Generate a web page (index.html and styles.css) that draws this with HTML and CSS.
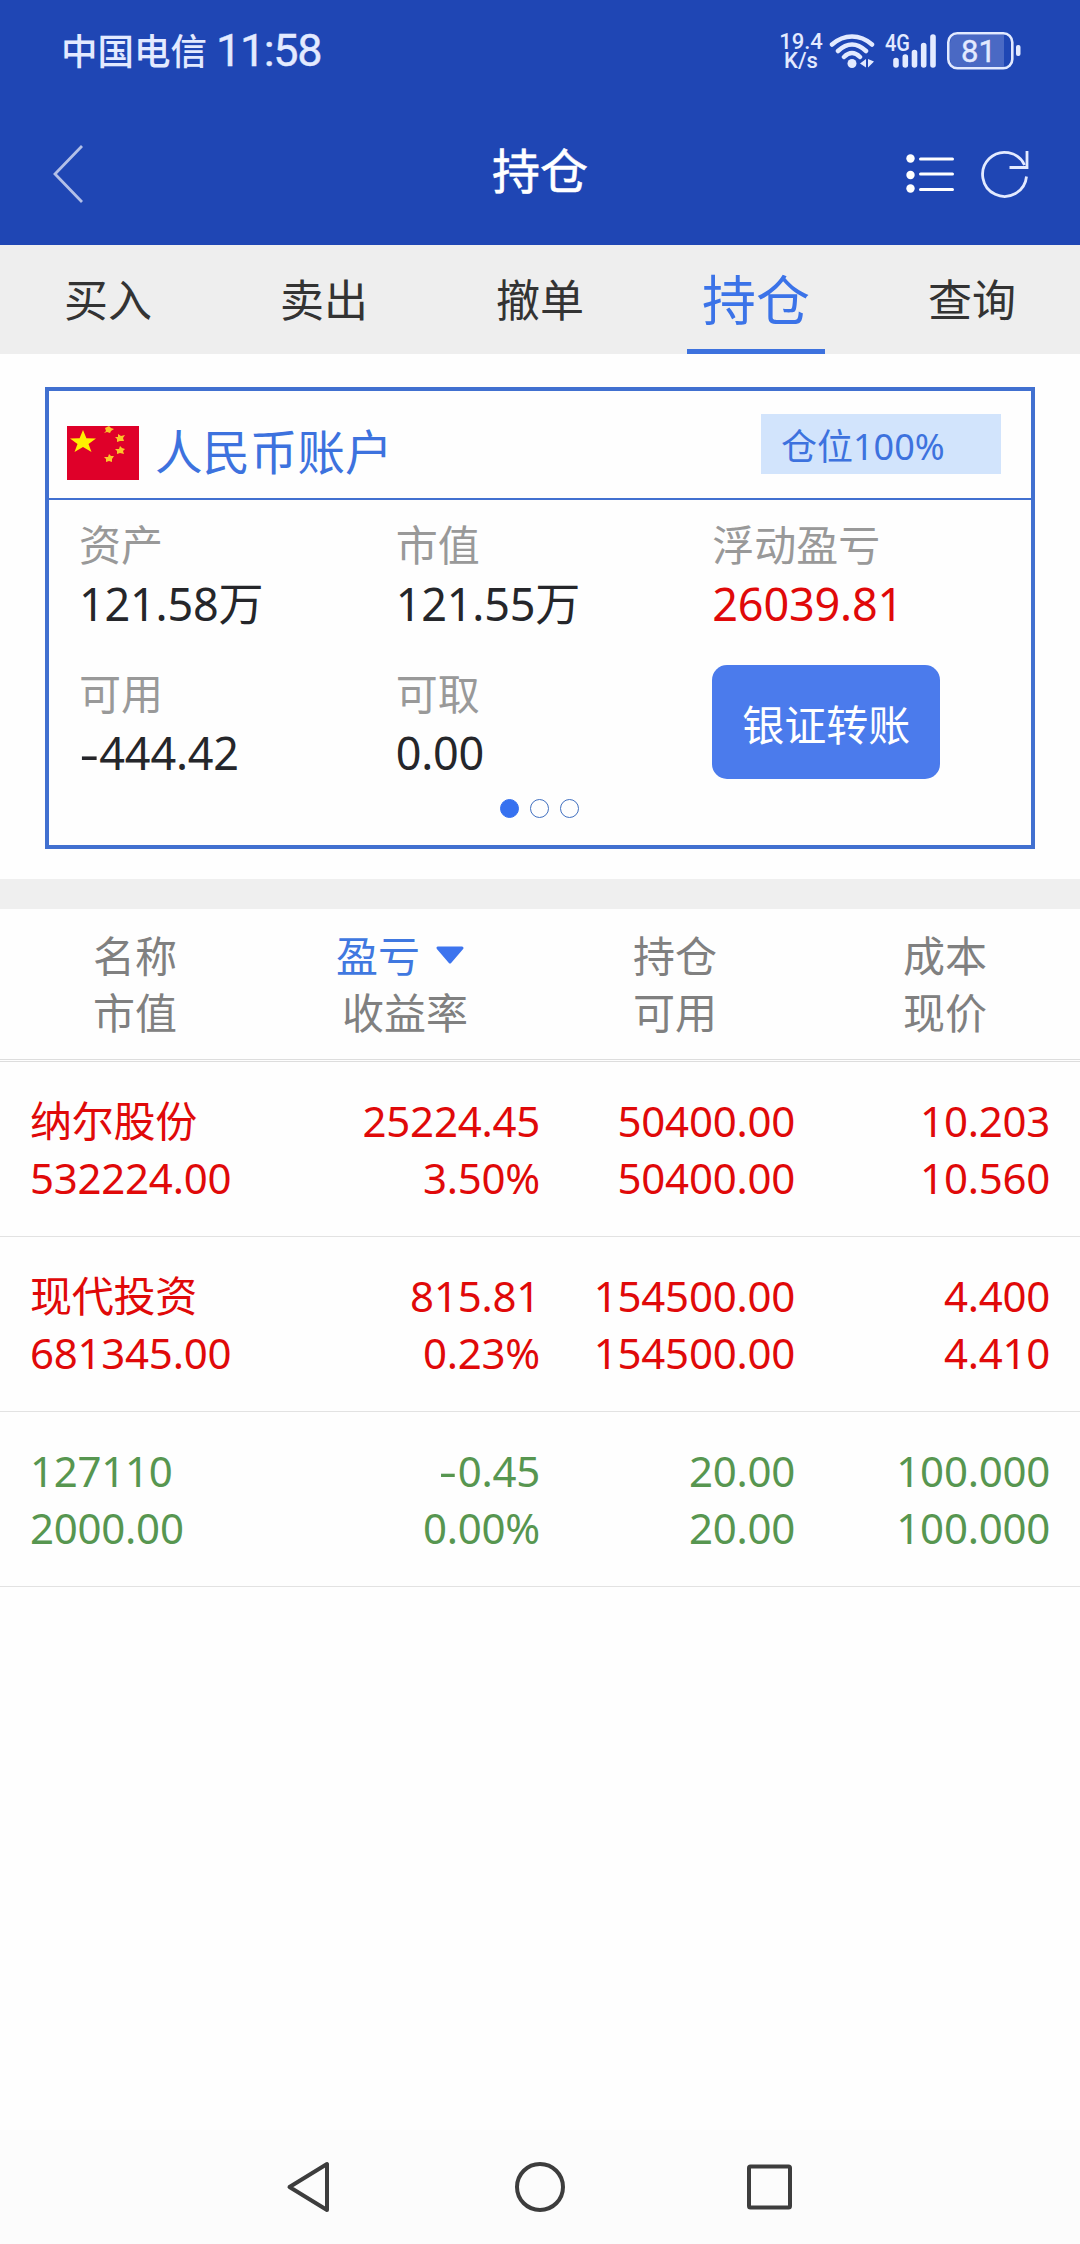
FILE: index.html
```html
<!DOCTYPE html>
<html lang="zh-CN">
<head>
  <meta charset="UTF-8">
  <title>持仓</title>
  <link rel="stylesheet" href="styles.css">
</head>
<body>
  <div class="header">
    <div class="status-bar">
      <div class="carrier">中国电信</div>
      <div class="clock">11:58</div>
      <div class="status-icons">
        <div class="speed"><span>19.4</span><span>K/s</span></div>
        <svg class="wifi" width="46" height="36" viewBox="0 0 46 36" fill="none" stroke="#e3eaff" stroke-width="4.5" stroke-linecap="round">
          <path d="M3 11.500Q12 3.500 23 3.500T43 11.500M9 18Q16 11.500 23 11.500T37 18M15 24Q19 20 23 20T31 24"/>
          <circle cx="23" cy="30.500" r="4.500" fill="#e3eaff" stroke="none"/>
          <path d="M37 26v8.500l-6-4zM39 26v8.500l6-6z" fill="#e3eaff" stroke="none"/>
        </svg>
        <svg class="signal" width="52" height="42" viewBox="0 -3 52 42">
          <text x="0" y="18" class="signal-text" textLength="25" lengthAdjust="spacingAndGlyphs">4G</text>
          <path d="M11 27.500V32M20.300 24V32M29.500 19.500V32M38.700 12.500V32M48 4V32" stroke="#e3eaff" stroke-width="5.600" stroke-linecap="round"/>
        </svg>
        <svg class="battery" width="74" height="38" viewBox="0 0 74 38">
          <path d="M11 2.500H57V35.500H11Q3 35.500 3 27V11Q3 2.500 11 2.500z" fill="#4a69c4"/>
          <rect x="1.300" y="1.300" width="64" height="35" rx="9" fill="none" stroke="#e3eaff" stroke-width="2.600"/>
          <rect x="69" y="13" width="4.500" height="11" rx="2" fill="#e3eaff"/>
          <text x="31.500" y="30" text-anchor="middle" class="battery-text">81</text>
        </svg>
      </div>
    </div>
    <div class="title-bar">
      <svg class="back" width="32" height="60" viewBox="0 0 32 60" fill="none" stroke="#b3c0e8" stroke-width="2.800">
        <path d="M31 2L4 30L31 58"/>
      </svg>
      <h1>持仓</h1>
      <div class="actions">
        <svg width="48" height="40" viewBox="0 0 48 40" fill="#fff">
          <circle cx="4.500" cy="4.500" r="4.200"/><circle cx="4.500" cy="21" r="4.200"/><circle cx="4.500" cy="34.500" r="4.200"/>
          <path d="M14.500 5H46.500M14.500 20H46.500M14.500 35.500H46.500" stroke="#fff" stroke-width="3" stroke-linecap="round"/>
        </svg>
        <svg width="48" height="48" viewBox="0 0 48 48" fill="none" stroke="#e3eaff" stroke-width="2.800">
          <path d="M45.500 26.500A22 22 0 1 1 43.500 15"/>
          <path d="M28.500 17.500H46V1"/>
        </svg>
      </div>
    </div>
  </div>

  <div class="tabs">
    <div class="tab">买入</div>
    <div class="tab">卖出</div>
    <div class="tab">撤单</div>
    <div class="tab active">持仓</div>
    <div class="tab">查询</div>
  </div>

  <div class="account">
    <div class="account-header">
      <svg class="flag" width="72" height="54" viewBox="0 0 72 54">
        <rect width="72" height="54" fill="#df0029"/>
        <path d="M16 4l3.400 8.300 9.600.3-7.500 5.400 3 8-8.500-5-8.500 5 3-8-7.500-5.400 9.600-.3z" fill="#fff000"/>
        <g fill="#fbc52a">
          <path d="M42 0l2 2 3 1-3 2-1 2-3-1-3 1 2-2-1-3z"/>
          <path d="M51 8l3 2 4-1-2 3 1 3-4 0-3 1 0-3-2-2 3 0z"/>
          <path d="M53 20l2 2 3 1-2 2 1 3-4-1-3 1 0-3-2-2 4 0z"/>
          <path d="M42 28l2 2 3 0-2 3 0 3-3-1-3 1 0-3-2-2 4 0z"/>
        </g>
      </svg>
      <div class="account-name">人民币账户</div>
      <div class="badge">仓位100%</div>
    </div>
    <div class="account-grid">
      <div class="item"><div class="label">资产</div><div class="value">121.58万</div></div>
      <div class="item"><div class="label">市值</div><div class="value">121.55万</div></div>
      <div class="item"><div class="label">浮动盈亏</div><div class="value red">26039.81</div></div>
      <div class="item"><div class="label">可用</div><div class="value"><span class="minus">-</span>444.42</div></div>
      <div class="item"><div class="label">可取</div><div class="value">0.00</div></div>
      <div class="item"><button class="transfer">银证转账</button></div>
    </div>
    <div class="dots">
      <span class="dot current"></span>
      <span class="dot"></span>
      <span class="dot"></span>
    </div>
  </div>

  <div class="list-header">
    <div>名称<br>市值</div>
    <div>
      <div class="sort">盈亏<svg width="30" height="19" viewBox="0 0 30 19"><path d="M3 2H27L15 16z" fill="#3d74ee" stroke="#3d74ee" stroke-width="3" stroke-linejoin="round"/></svg></div>
      收益率
    </div>
    <div>持仓<br>可用</div>
    <div>成本<br>现价</div>
  </div>

  <div class="list">
    <div class="row red">
      <div>纳尔股份<br>532224.00</div>
      <div>25224.45<br>3.50%</div>
      <div>50400.00<br>50400.00</div>
      <div>10.203<br>10.560</div>
    </div>
    <div class="row red">
      <div>现代投资<br>681345.00</div>
      <div>815.81<br>0.23%</div>
      <div>154500.00<br>154500.00</div>
      <div>4.400<br>4.410</div>
    </div>
    <div class="row green">
      <div>127110<br>2000.00</div>
      <div><span class="minus">-</span>0.45<br>0.00%</div>
      <div>20.00<br>20.00</div>
      <div>100.000<br>100.000</div>
    </div>
  </div>

  <div class="nav-bar">
    <svg width="46" height="52" viewBox="0 0 46 52"><path d="M3.500 26L41 3V49z"/></svg>
    <svg width="52" height="52" viewBox="0 0 52 52"><circle cx="26" cy="26" r="23"/></svg>
    <svg width="46" height="52" viewBox="0 0 46 52"><rect x="2" y="5.500" width="41" height="41" rx="1.500"/></svg>
  </div>
</body>
</html>
```
FILE: styles.css
```css
* {
  box-sizing: border-box;
}
body {
  margin: 0;
  height: 2244px;
  display: flex;
  flex-direction: column;
  background: #fefefe;
  font-family: "Noto Sans", "Noto Sans CJK SC", sans-serif;
  font-size: 42px;
  color: #25262a;
}
svg {
  display: block;
  flex: none;
}

/* header */
.header {
  height: 245px;
  background: #1f46b4;
  color: #fff;
}
.status-bar {
  display: flex;
  align-items: center;
  height: 102px;
  padding: 0 59px 0 61px;
  color: #e3eaff;
}
.carrier {
  font-size: 36.5px;
  font-weight: 500;
  line-height: 50px;
}
.clock {
  margin-left: 9px;
  font-family: Roboto, sans-serif;
  font-size: 45px;
  line-height: 50px;
  letter-spacing: -1.4px;
  -webkit-text-stroke: 0.4px #e3eaff;
}
.status-icons {
  display: flex;
  align-items: center;
  margin-left: auto;
}
.speed {
  display: flex;
  flex-direction: column;
  width: 46px;
  text-align: center;
  font-family: "Liberation Sans Narrow", Roboto, sans-serif;
  font-size: 22px;
  font-weight: 500;
  line-height: 19px;
}
.wifi {
  margin-left: 5px;
}
.signal {
  margin-left: 10px;
}
.battery {
  margin-left: 10px;
}
.signal-text {
  font: 500 23px Roboto, sans-serif;
  fill: #e3eaff;
}
.battery-text {
  font: 31px Roboto, sans-serif;
  fill: #e3eaff;
  stroke: #e3eaff;
  stroke-width: 0.4px;
}
.title-bar {
  display: grid;
  grid-template-columns: 1fr auto 1fr;
  align-items: center;
  height: 143px;
  padding: 0 51px;
}
.title-bar h1 {
  margin: 0 0 6px;
  font-size: 48px;
  font-weight: 400;
  line-height: 60px;
  -webkit-text-stroke: 0.6px #fff;
}
.actions {
  display: flex;
  align-items: center;
  justify-content: flex-end;
  gap: 27px;
}

/* tabs */
.tabs {
  display: grid;
  grid-template-columns: repeat(5, 1fr);
  height: 109px;
  background: #eee;
}
.tab {
  justify-self: center;
  width: 138px;
  height: 109px;
  text-align: center;
  font-size: 44px;
  line-height: 111px;
  color: #333;
}
.tab.active {
  border-bottom: 5px solid #3d72de;
  font-size: 54px;
  color: #3b73e8;
}

/* account card */
.account {
  height: 462px;
  margin: 33px 45px 30px;
  border: 4px solid #4170d0;
}
.account-header {
  display: flex;
  height: 109px;
  padding: 0 30px 0 18px;
  border-bottom: 2px solid #4170d0;
}
.flag {
  margin-top: 35px;
}
.account-name {
  margin-left: 16px;
  font-size: 47.5px;
  line-height: 122px;
  color: #3d72de;
}
.badge {
  width: 240px;
  height: 60px;
  margin: 23px 0 0 auto;
  padding-left: 20px;
  background: #d2e4fc;
  color: #3d72de;
  font-size: 36px;
  line-height: 66px;
}
.account-grid {
  display: grid;
  grid-template-columns: repeat(3, 1fr);
  grid-auto-rows: 149px;
  padding: 16px 2px 0 30px;
}
.label {
  line-height: 58px;
  color: #999;
}
.value {
  font-size: 45px;
  line-height: 60px;
  letter-spacing: -0.2px;
}
.transfer {
  display: block;
  width: 228px;
  height: 114px;
  padding: 0;
  border: none;
  border-radius: 15px;
  background: #4b7bec;
  color: #fff;
  font-family: inherit;
  font-size: 42px;
}
.dots {
  display: flex;
  justify-content: center;
  gap: 11px;
  margin-top: -15px;
  padding-right: 1px;
}
.dot {
  width: 19px;
  height: 19px;
  border: 1px solid #4170c0;
  border-radius: 50%;
}
.dot.current {
  background: #3671f0;
  border-color: #3671f0;
}

/* positions */
.list-header {
  display: grid;
  grid-template-columns: repeat(4, 1fr);
  height: 183px;
  padding-top: 18px;
  border-top: 30px solid #efefef;
  border-bottom: 3px double #ddd;
  text-align: center;
  line-height: 57px;
  color: #808080;
}
.sort {
  display: flex;
  align-items: center;
  justify-content: center;
  gap: 15px;
  padding-right: 9px;
  color: #4078e0;
}
.row {
  display: grid;
  grid-template-columns: repeat(4, 1fr);
  height: 175px;
  padding: 30px 30px 0;
  border-bottom: 1px solid #e2e2e2;
  text-align: right;
  line-height: 57px;
  letter-spacing: -0.25px;
}
.row div:first-child {
  text-align: left;
}
.minus {
  display: inline-block;
  transform: scaleX(1.35);
  margin: 0 3px;
}
.red {
  color: #e00909;
}
.green {
  color: #579650;
}

/* system navigation */
.nav-bar {
  display: flex;
  justify-content: space-between;
  align-items: center;
  height: 114px;
  margin-top: auto;
  padding: 0 287px 0 286px;
  background: #fcfcfc;
}
.nav-bar svg {
  fill: none;
  stroke: #3d3d3d;
  stroke-width: 4;
  stroke-linejoin: round;
}
```
